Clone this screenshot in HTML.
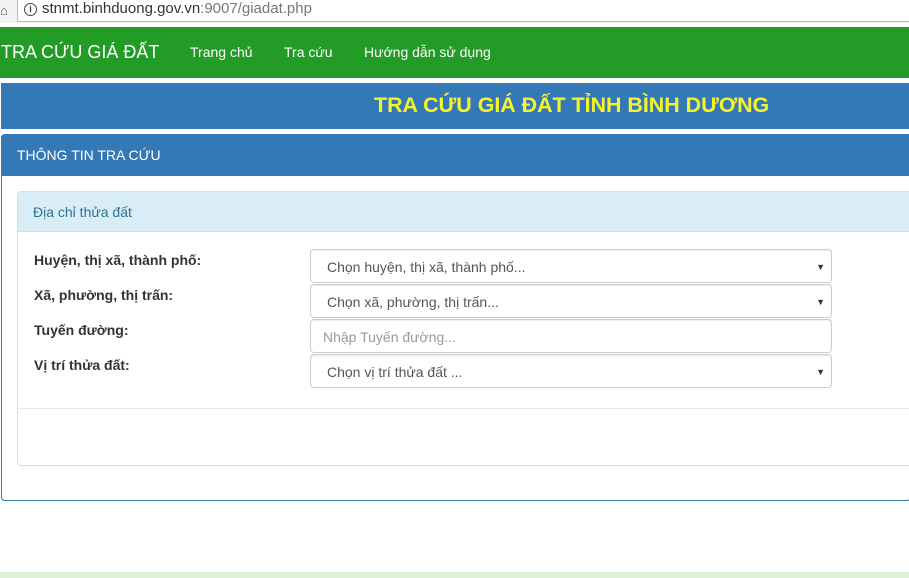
<!DOCTYPE html>
<html><head><meta charset="utf-8"><style>
*{box-sizing:border-box;margin:0;padding:0}
body{width:909px;height:578px;overflow:hidden;background:#fff;font-family:"Liberation Sans",Arial,sans-serif;position:relative}
.abs{position:absolute}
.addr{left:0;top:0;width:909px;height:23px;background:#f2f2f2;}
.addrbox{left:17px;top:0;width:892px;height:22px;background:#fff;border:1px solid #bbb;border-top:none;border-right:none;font-size:15px;color:#333;padding:0 0 0 24px}
.nav{left:0;top:27px;width:909px;height:51px;background:#239b27;color:#fff}
.nav span{position:absolute;top:17px;font-size:14px}
.banner{left:1px;top:83px;width:908px;height:46px;background:#3479b6}
.panel{left:1px;top:134px;width:910px;height:367px;border:1px solid #3479b6;border-radius:4px}
.ph{left:1px;top:134px;width:908px;height:42px;background:#3479b6;color:#fff;font-size:14px;padding:13px 0 0 16px;border-radius:4px 0 0 0}
.inner{left:17px;top:191px;width:900px;height:275px;border:1px solid #bce8f1;border-radius:4px}
.ih{left:18px;top:192px;width:891px;height:40px;background:#d9edf7;border-bottom:1px solid #bce8f1;color:#31708f;font-size:14px;padding:12px 0 0 15px}
.lbl{left:34px;font-size:14px;font-weight:bold;color:#333}
.sel{left:310px;width:522px;height:34px;border:1px solid #ccc;border-radius:4px;font-size:14px;color:#555;padding:9px 0 0 16px;box-shadow:inset 0 1px 1px rgba(0,0,0,.08)}
.sel b{position:absolute;right:6px;top:12px;font-size:9px;color:#333;font-weight:normal}
</style></head><body>
<div class="abs addr"></div>
<div class="abs" style="left:0;top:3px;font-size:13px;color:#555">⌂</div>
<div class="abs addrbox"><span style="position:absolute;left:6px;top:3px;width:13px;height:13px;border:1.5px solid #444;border-radius:50%;font-size:9px;text-align:center;line-height:10px;font-weight:bold">i</span>stnmt.binhduong.gov.vn<span style="color:#777">:9007/giadat.php</span></div>
<div class="abs nav">
<span style="left:1px;top:15px;font-size:18px">TRA CỨU GIÁ ĐẤT</span>
<span style="left:190px">Trang chủ</span>
<span style="left:284px">Tra cứu</span>
<span style="left:364px">Hướng dẫn sử dụng</span>
</div>
<div class="abs banner"><div class="abs" style="left:373px;top:10px;color:#f5f52a;font-weight:bold;font-size:21.4px">TRA CỨU GIÁ ĐẤT TỈNH BÌNH DƯƠNG</div></div>
<div class="abs panel"></div>
<div class="abs ph">THÔNG TIN TRA CỨU</div>
<div class="abs inner"></div>
<div class="abs ih">Địa chỉ thửa đất</div>
<div class="abs lbl" style="top:252px">Huyện, thị xã, thành phố:</div>
<div class="abs lbl" style="top:287px">Xã, phường, thị trấn:</div>
<div class="abs lbl" style="top:322px">Tuyến đường:</div>
<div class="abs lbl" style="top:357px">Vị trí thửa đất:</div>
<div class="abs sel" style="top:249px">Chọn huyện, thị xã, thành phố...<b>▼</b></div>
<div class="abs sel" style="top:284px">Chọn xã, phường, thị trấn...<b>▼</b></div>
<div class="abs sel" style="top:319px;color:#999;padding-left:12px">Nhập Tuyến đường...</div>
<div class="abs sel" style="top:354px">Chọn vị trí thửa đất ...<b>▼</b></div>
<div class="abs" style="left:18px;top:408px;width:891px;height:1px;background:#e8e8e8"></div>
<div class="abs" style="left:0;top:572px;width:909px;height:6px;background:#dff0d8"></div>
</body></html>
